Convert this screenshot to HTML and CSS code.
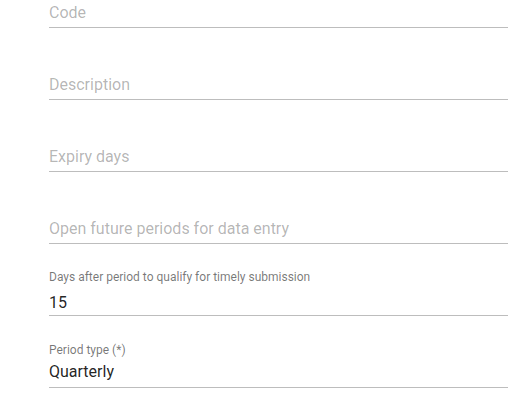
FILE: index.html
```html
<!DOCTYPE html>
<html>
<head>
<meta charset="utf-8">
<link rel="stylesheet" href="styles.css">
</head>
<body>
<div class="form">
  <div class="field empty"><span class="placeholder">Code</span></div>
  <div class="field empty"><span class="placeholder">Description</span></div>
  <div class="field empty"><span class="placeholder">Expiry days</span></div>
  <div class="field empty"><span class="placeholder">Open future periods for data entry</span></div>
  <div class="field filled">
    <span class="label">Days after period to qualify for timely submission</span>
    <span class="value">15</span>
  </div>
  <div class="field select">
    <span class="label">Period type (*)</span>
    <span class="value">Quarterly</span>
  </div>
</div>
</body>
</html>
```
FILE: styles.css
```css
html, body {
  margin: 0;
  padding: 0;
  background: #ffffff;
  overflow: hidden;
}
body {
  font-family: Roboto, "Liberation Sans", sans-serif;
}
.form {
  margin-top: -44px;
  padding-left: 49px;
  display: flex;
  flex-direction: column;
}
.field {
  height: 72px;
  box-sizing: border-box;
  border-bottom: 1px solid #bdbdbd;
  display: flex;
  flex-direction: column;
  justify-content: flex-end;
}
.placeholder {
  font-size: 16px;
  line-height: 20px;
  color: rgba(0, 0, 0, 0.3);
}
.field.empty {
  padding-bottom: 4px;
}
.label {
  font-size: 12px;
  line-height: 16px;
  color: rgba(0, 0, 0, 0.54);
}
.value {
  font-size: 16px;
  line-height: 20px;
  color: rgba(0, 0, 0, 0.87);
}
.field.filled {
  padding-bottom: 2px;
}
.field.filled .label {
  margin-bottom: 8px;
}
.field.select {
  padding-bottom: 5px;
}
.field.select .label {
  margin-bottom: 4px;
}
```
